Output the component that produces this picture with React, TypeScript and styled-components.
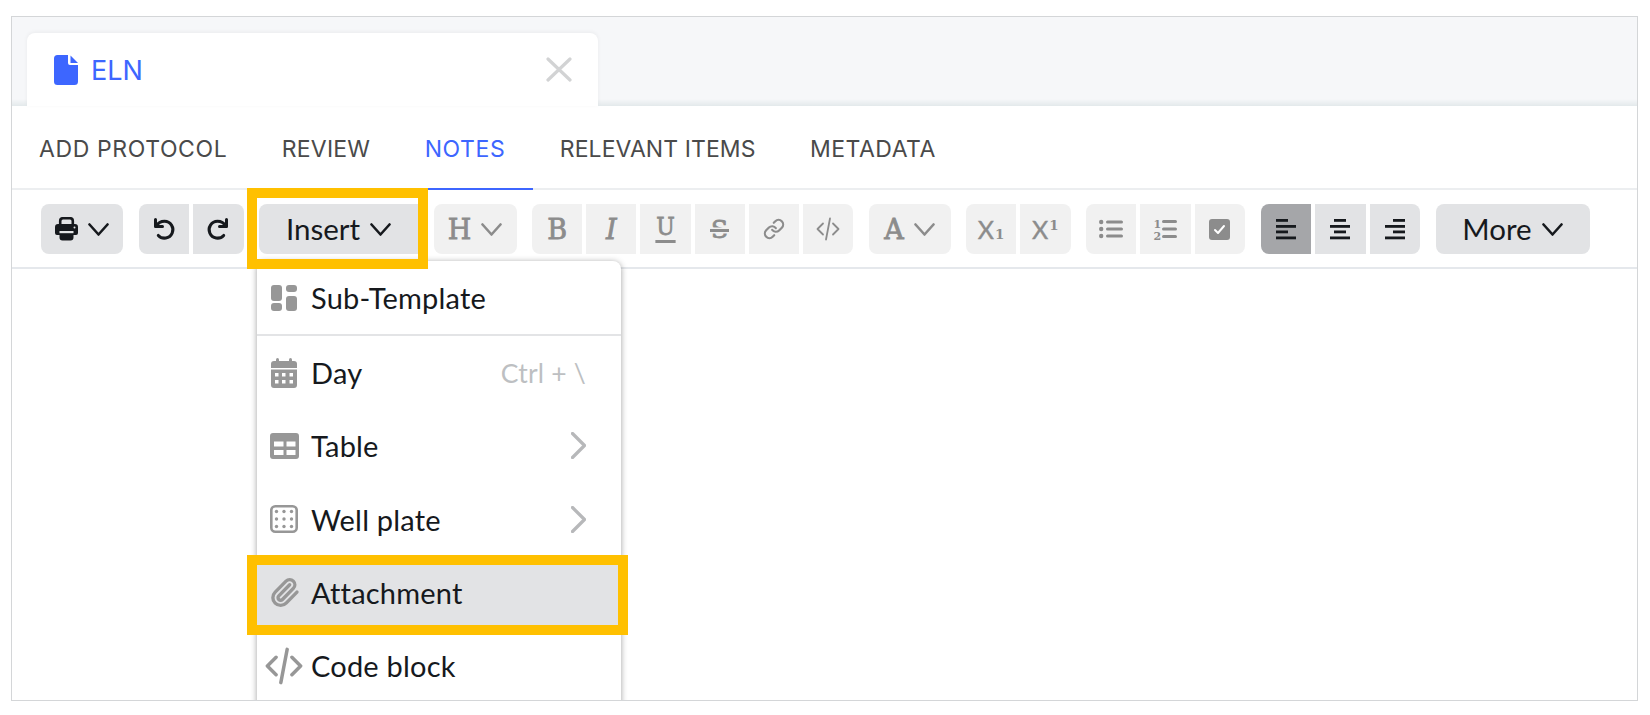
import React from 'react';
import styled, { createGlobalStyle } from 'styled-components';
import { Link, Paperclip } from 'lucide-react';

const GlobalStyle = createGlobalStyle`
  html, body {
    margin: 0;
    padding: 0;
    background: #fff;
    font-family: Lato, "Liberation Sans", sans-serif;
  }
`;

const Page = styled.div`
  width: 1650px;
  height: 715px;
  padding: 16px 12px 14px 11px;
  box-sizing: border-box;
`;

const Frame = styled.div`
  position: relative;
  height: 100%;
  box-sizing: border-box;
  border: 1px solid #d4d6d8;
  overflow: hidden;
  display: flex;
  flex-direction: column;
`;

const TabStrip = styled.div`
  height: 89px;
  flex: none;
  padding: 16px 0 0 15px;
  box-sizing: border-box;
  background: linear-gradient(#f6f7f9 0, #f6f7f9 82px, #e3e9eb 89px);
  display: flex;
`;

const DocTab = styled.div`
  width: 571px;
  background: #fff;
  border-radius: 8px 8px 0 0;
  box-shadow: 0 -1px 4px rgba(0, 0, 0, 0.05);
  display: flex;
  align-items: center;
  padding: 0 26px 0 27px;
  box-sizing: border-box;
`;

const DocTitle = styled.span`
  margin-left: 13px;
  padding-top: 1px;
  flex: 1;
  font: 400 27px Inter, sans-serif;
  color: #3d66ff;
`;

const NavRow = styled.div`
  height: 84px;
  flex: none;
  display: flex;
  padding-left: 0;
  box-sizing: border-box;
  border-bottom: 2px solid #eceef0;
`;

const NavItem = styled.div<{ $active?: boolean; $track: number }>`
  padding: 4px 27.5px 0 27px;
  height: 84px;
  box-sizing: border-box;
  display: flex;
  align-items: center;
  font: 400 23px Inter, sans-serif;
  letter-spacing: ${({ $track }) => $track}px;
  color: ${({ $active }) => ($active ? '#3d66ff' : '#4a4a4a')};
  border-bottom: 2px solid ${({ $active }) => ($active ? '#3d66ff' : 'transparent')};
`;

const Toolbar = styled.div`
  height: 79px;
  flex: none;
  display: flex;
  gap: 15.5px;
  padding: 14px 0 0 29px;
  box-sizing: border-box;
  border-bottom: 2px solid #e5e8ec;
`;

const Group = styled.div<{ $w: number }>`
  position: relative;
  width: ${({ $w }) => $w}px;
  height: 50px;
  display: flex;
  gap: 4px;
`;

type Tone = 'plain' | 'muted' | 'on';

const toneBg = { plain: '#e2e3e5', muted: '#f1f1f1', on: '#a5a6a9' };

const ToolButton = styled.div<{ $tone?: Tone }>`
  flex: 1;
  min-width: 0;
  display: flex;
  align-items: center;
  justify-content: center;
  gap: 10px;
  background: ${({ $tone = 'plain' }) => toneBg[$tone]};
  color: ${({ $tone = 'plain' }) => ($tone === 'muted' ? '#8c8c8c' : '#16191d')};
  font-size: 29.5px;
  line-height: 34px;

  &:first-child {
    border-radius: 8px 0 0 8px;
  }
  &:last-child {
    border-radius: 0 8px 8px 0;
  }
  &:only-child {
    border-radius: 8px;
  }
`;

const SlabGlyph = styled.span<{ $italic?: boolean; $mark?: 'under' | 'strike' }>`
  position: relative;
  display: inline-block;
  font-family: "DejaVu Serif", serif;
  font-size: ${({ $mark }) => ($mark === 'under' ? 25 : $mark === 'strike' ? 25 : 27)}px;
  font-style: ${({ $italic }) => ($italic ? 'italic' : 'normal')};
  font-weight: 400;
  line-height: 1;
  -webkit-text-stroke: 0.8px currentColor;
  transform: ${({ $mark }) => ($mark === 'under' ? 'translateY(-3px)' : 'none')} scaleX(0.88);

  &::after {
    content: ${({ $mark }) => ($mark ? "''" : 'none')};
    position: absolute;
    left: -1px;
    right: -1px;
    height: 3px;
    background: currentColor;
    top: ${({ $mark }) => ($mark === 'under' ? '26px' : '12px')};
    box-shadow: ${({ $mark }) => ($mark === 'strike' ? '0 0 0 1.5px #f1f1f1' : 'none')};
  }
`;

const ScriptGlyph = styled.span`
  font: 400 25px Lato, sans-serif;
  line-height: 1;
  display: flex;
  height: 25px;
  -webkit-text-stroke: 0.4px currentColor;
`;

const ScriptDigit = styled.span<{ $up?: boolean }>`
  font: 700 13.5px "DejaVu Serif", serif;
  align-self: ${({ $up }) => ($up ? 'flex-start' : 'flex-end')};
  margin-left: 1px;
  -webkit-text-stroke: 0;
`;

const Highlight = styled.div<{ $t: number; $r: number; $b: number; $l: number }>`
  position: absolute;
  top: ${({ $t }) => $t}px;
  right: ${({ $r }) => $r}px;
  bottom: ${({ $b }) => $b}px;
  left: ${({ $l }) => $l}px;
  border: 10px solid #ffc000;
  pointer-events: none;
  z-index: 3;
`;

const Menu = styled.div`
  position: absolute;
  top: 244px;
  left: 245px;
  width: 364px;
  height: 460px;
  background: #fff;
  border-radius: 8px 8px 0 0;
  box-shadow: 0 1px 6px rgba(0, 0, 0, 0.38);
  z-index: 2;
`;

const MenuRow = styled.div<{ $on?: boolean; $divider?: boolean }>`
  position: relative;
  height: ${({ $divider }) => ($divider ? 75 : 73.25)}px;
  box-sizing: border-box;
  display: flex;
  align-items: center;
  padding: 0 35px 0 0;
  background: ${({ $on }) => ($on ? '#e2e3e5' : 'transparent')};
  border-bottom: ${({ $divider }) => ($divider ? '2px solid #e3e4e6' : 'none')};
  font-size: 29px;
  letter-spacing: 0.2px;
  color: #16191d;
`;

const MenuIcon = styled.div`
  width: 54px;
  flex: none;
  display: flex;
  justify-content: center;
  color: #979797;
`;

const MenuLabel = styled.span`
  flex: 1;
`;

const Shortcut = styled.span`
  font-size: 26.5px;
  color: #bdbfc2;
`;

const MutedChevron = styled.div`
  display: flex;
  color: #b7b8ba;
`;

const Chevron = ({ w = 21, h = 13, sw = 2.600, dir = 'down' }: { w?: number; h?: number; sw?: number; dir?: 'down' | 'right' }) => (
  <svg width={w} height={h} viewBox={`0 0 ${w} ${h}`} fill="none" stroke="currentColor" strokeWidth={sw} strokeLinecap="round" strokeLinejoin="round">
    {dir === 'down' ? (
      <polyline points={`1.5,1.5 ${w / 2},${h - 1.5} ${w - 1.5},1.5`} />
    ) : (
      <polyline points={`1.5,1.5 ${w - 1.5},${h / 2} 1.5,${h - 1.5}`} />
    )}
  </svg>
);

const PrinterIcon = () => (
  <svg width="23" height="24" viewBox="0 0 23 24">
    <path d="M5.200 8V4a2.800 2.800 0 0 1 2.800-2.800h7A2.800 2.800 0 0 1 17.800 4v4" fill="none" stroke="currentColor" strokeWidth="2.600" />
    <path d="M3 7h17a3 3 0 0 1 3 3v6a2 2 0 0 1-2 2h-2.500v2.500a3 3 0 0 1-3 3h-8a3 3 0 0 1-3-3V18H2a2 2 0 0 1-2-2v-6a3 3 0 0 1 3-3z" fill="currentColor" />
    <rect x="4.500" y="14" width="14" height="2.200" fill="#e2e3e5" />
    <circle cx="19.500" cy="10.500" r="1" fill="#e2e3e5" />
  </svg>
);

const UndoIcon = ({ flip }: { flip?: boolean }) => (
  <svg width="24" height="24" viewBox="0 0 24 24" fill="none" stroke="currentColor" strokeWidth="3" strokeLinejoin="round" strokeLinecap="round">
    <g transform={flip ? 'translate(24 0) scale(-1 1)' : undefined}>
      <path d="M3.500 2.500v7h7" />
      <path d="M4 9.500C6 6 9 4.300 12.500 4.300a8.400 8.400 0 1 1-6.200 14.100" />
    </g>
  </svg>
);

const DocIcon = () => (
  <svg width="24" height="30" viewBox="0 0 24 30" fill="#3d66ff">
    <path d="M3.500 0H14v8a2 2 0 0 0 2 2h8v16.500a3.500 3.500 0 0 1-3.500 3.500h-17A3.500 3.500 0 0 1 0 26.500v-23A3.500 3.500 0 0 1 3.500 0z" />
    <path d="M16.500 0.500L24 8h-7.500z" />
  </svg>
);

const CloseIcon = () => (
  <svg width="26" height="25" viewBox="0 0 26 25" fill="none" stroke="#d2d3d4" strokeWidth="3.200" strokeLinecap="round">
    <path d="M2 2l22 21M24 2L2 23" />
  </svg>
);

const CodeIcon = ({ size = 24, sw = 1.800 }: { size?: number; sw?: number }) => (
  <svg width={size} height={size} viewBox="0 0 24 24" fill="none" stroke="currentColor" strokeWidth={sw} strokeLinecap="round" strokeLinejoin="round">
    <path d="M7 6.500L1.500 12 7 17.500M17 6.500L22.500 12 17 17.500M14 1.500L10 22.500" />
  </svg>
);

const BulletListIcon = () => (
  <svg width="24" height="20" viewBox="0 0 24 20" fill="currentColor">
    <circle cx="2.200" cy="3" r="2.200" />
    <circle cx="2.200" cy="10" r="2.200" />
    <circle cx="2.200" cy="17" r="2.200" />
    <rect x="7" y="1.500" width="17" height="3" rx="1.500" />
    <rect x="7" y="8.500" width="17" height="3" rx="1.500" />
    <rect x="7" y="15.500" width="17" height="3" rx="1.500" />
  </svg>
);

const NumberListIcon = () => (
  <svg width="24" height="26" viewBox="0 0 24 26" fill="currentColor">
    <text x="0.500" y="12" fontFamily='"DejaVu Serif", serif' fontWeight="700" fontSize="11">1</text>
    <text x="0.500" y="24" fontFamily='"DejaVu Serif", serif' fontWeight="700" fontSize="11">2</text>
    <rect x="9" y="4" width="15" height="3" rx="1.500" />
    <rect x="9" y="11.500" width="15" height="3" rx="1.500" />
    <rect x="9" y="19" width="15" height="3" rx="1.500" />
  </svg>
);

const CheckIcon = () => (
  <svg width="21" height="21" viewBox="0 0 21 21">
    <rect width="21" height="21" rx="3" fill="currentColor" />
    <path d="M6 11l3 3 6-7" fill="none" stroke="#fff" strokeWidth="2" strokeLinecap="round" strokeLinejoin="round" />
  </svg>
);

const AlignIcon = ({ side }: { side: 'left' | 'center' | 'right' }) => {
  const place = (w: number) => (side === 'left' ? 0 : side === 'right' ? 20 - w : (20 - w) / 2);
  return (
    <svg width="20" height="22" viewBox="0 0 20 22" fill="currentColor">
      <rect x={place(12)} y="1" width="12" height="2.800" />
      <rect x={place(20)} y="7" width="20" height="2.800" />
      <rect x={place(12)} y="12.500" width="12" height="2.800" />
      <rect x={place(20)} y="18.500" width="20" height="2.800" />
    </svg>
  );
};

const TemplateIcon = () => (
  <svg width="26" height="26" viewBox="0 0 26 26" fill="currentColor">
    <rect x="0" y="0" width="11" height="16" rx="3" />
    <rect x="0" y="18" width="11" height="8" rx="3" />
    <rect x="15" y="0" width="11" height="7" rx="3" />
    <rect x="15" y="11" width="11" height="15" rx="3" />
  </svg>
);

const CalendarIcon = () => (
  <svg width="26" height="30" viewBox="0 0 26 30" fill="currentColor">
    <rect x="5" y="0" width="3" height="6" rx="1.500" />
    <rect x="18" y="0" width="3" height="6" rx="1.500" />
    <path d="M3 3h20a3 3 0 0 1 3 3v4H0V6a3 3 0 0 1 3-3z" />
    <path fillRule="evenodd" d="M0 11.500h26V27a3 3 0 0 1-3 3H3a3 3 0 0 1-3-3zM4 15v3.500h3.500V15zM11 15v3.500h3.500V15zM18.500 15v3.500H22V15zM4 22v3.500h3.500V22zM11 22v3.500h3.500V22zM18.500 22v3.500H22V22z" />
  </svg>
);

const TableIcon = () => (
  <svg width="29" height="26" viewBox="0 0 29 26" fill="currentColor">
    <path fillRule="evenodd" d="M3 0h23a3 3 0 0 1 3 3v20a3 3 0 0 1-3 3H3a3 3 0 0 1-3-3V3a3 3 0 0 1 3-3zM4 8.500v5h9.500v-5zM16.500 8.500v5h9v-5zM4 17v5h9.500v-5zM16.500 17v5h9v-5z" />
  </svg>
);

const PlateIcon = () => (
  <svg width="28" height="28" viewBox="0 0 28 28">
    <rect x="1.300" y="1.300" width="25.400" height="25.400" rx="4" fill="none" stroke="currentColor" strokeWidth="2.600" />
    {[6.500, 14, 21.500].flatMap((y) =>
      [6.500, 14, 21.500].map((x) => <circle key={`${x}-${y}`} cx={x} cy={y} r="1.700" fill="currentColor" />),
    )}
  </svg>
);

const App = () => (
  <Page>
    <GlobalStyle />
    <Frame>
      <TabStrip>
        <DocTab>
          <DocIcon />
          <DocTitle>ELN</DocTitle>
          <CloseIcon />
        </DocTab>
      </TabStrip>

      <NavRow>
        <NavItem $track={0.6}>ADD PROTOCOL</NavItem>
        <NavItem $track={0.2}>REVIEW</NavItem>
        <NavItem $track={0.6} $active>NOTES</NavItem>
        <NavItem $track={0.07}>RELEVANT ITEMS</NavItem>
        <NavItem $track={0.5}>METADATA</NavItem>
      </NavRow>

      <Toolbar>
        <Group $w={82}>
          <ToolButton><PrinterIcon /><Chevron /></ToolButton>
        </Group>
        <Group $w={105}>
          <ToolButton><UndoIcon /></ToolButton>
          <ToolButton><UndoIcon flip /></ToolButton>
        </Group>
        <Group $w={159}>
          <ToolButton>Insert<Chevron /></ToolButton>
          <Highlight $t={-16} $r={-10} $b={-15} $l={-12} />
        </Group>
        <Group $w={83}>
          <ToolButton $tone="muted"><SlabGlyph>H</SlabGlyph><Chevron /></ToolButton>
        </Group>
        <Group $w={321}>
          <ToolButton $tone="muted"><SlabGlyph>B</SlabGlyph></ToolButton>
          <ToolButton $tone="muted"><SlabGlyph $italic>I</SlabGlyph></ToolButton>
          <ToolButton $tone="muted"><SlabGlyph $mark="under">U</SlabGlyph></ToolButton>
          <ToolButton $tone="muted"><SlabGlyph $mark="strike">S</SlabGlyph></ToolButton>
          <ToolButton $tone="muted"><Link size={22} strokeWidth={2.400} /></ToolButton>
          <ToolButton $tone="muted"><CodeIcon /></ToolButton>
        </Group>
        <Group $w={82}>
          <ToolButton $tone="muted"><SlabGlyph>A</SlabGlyph><Chevron /></ToolButton>
        </Group>
        <Group $w={104.500}>
          <ToolButton $tone="muted"><ScriptGlyph>X<ScriptDigit>1</ScriptDigit></ScriptGlyph></ToolButton>
          <ToolButton $tone="muted"><ScriptGlyph>X<ScriptDigit $up>1</ScriptDigit></ScriptGlyph></ToolButton>
        </Group>
        <Group $w={159}>
          <ToolButton $tone="muted"><BulletListIcon /></ToolButton>
          <ToolButton $tone="muted"><NumberListIcon /></ToolButton>
          <ToolButton $tone="muted"><CheckIcon /></ToolButton>
        </Group>
        <Group $w={159.500}>
          <ToolButton $tone="on"><AlignIcon side="left" /></ToolButton>
          <ToolButton><AlignIcon side="center" /></ToolButton>
          <ToolButton><AlignIcon side="right" /></ToolButton>
        </Group>
        <Group $w={154}>
          <ToolButton>More<Chevron /></ToolButton>
        </Group>
      </Toolbar>

      <Menu>
        <MenuRow $divider>
          <MenuIcon><TemplateIcon /></MenuIcon>
          <MenuLabel>Sub-Template</MenuLabel>
        </MenuRow>
        <MenuRow>
          <MenuIcon><CalendarIcon /></MenuIcon>
          <MenuLabel>Day</MenuLabel>
          <Shortcut>Ctrl + \</Shortcut>
        </MenuRow>
        <MenuRow>
          <MenuIcon><TableIcon /></MenuIcon>
          <MenuLabel>Table</MenuLabel>
          <MutedChevron><Chevron w={15} h={27} sw={3.200} dir="right" /></MutedChevron>
        </MenuRow>
        <MenuRow>
          <MenuIcon><PlateIcon /></MenuIcon>
          <MenuLabel>Well plate</MenuLabel>
          <MutedChevron><Chevron w={15} h={27} sw={3.200} dir="right" /></MutedChevron>
        </MenuRow>
        <MenuRow $on>
          <MenuIcon><Paperclip size={31} strokeWidth={2.600} /></MenuIcon>
          <MenuLabel>Attachment</MenuLabel>
          <Highlight $t={-1} $r={-7} $b={-6} $l={-10} />
        </MenuRow>
        <MenuRow>
          <MenuIcon><CodeIcon size={38} sw={2.200} /></MenuIcon>
          <MenuLabel>Code block</MenuLabel>
        </MenuRow>
      </Menu>
    </Frame>
  </Page>
);

export default App;
